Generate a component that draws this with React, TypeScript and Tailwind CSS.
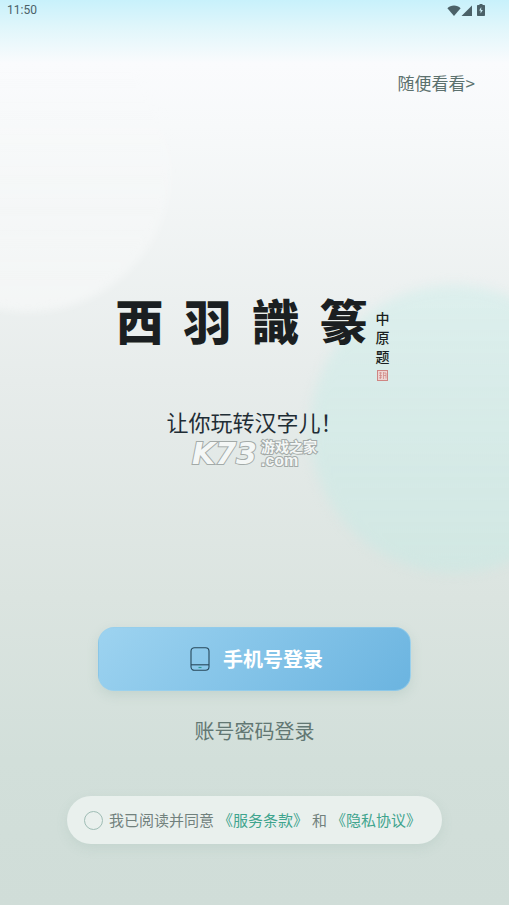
import { useState } from "react";

const BRAND = ["西", "羽", "識", "篆"];
const SIGNATURE = ["中", "原", "题"];

function WifiIcon() {
  return (
    <svg viewBox="0 0 14 11" className="h-[11px] w-[14px]" fill="currentColor" aria-hidden="true">
      <path d="M7 11 .4 3.2C2.200 1.500 4.400.6 7 .6s4.800.9 6.600 2.600z" />
    </svg>
  );
}

function SignalIcon() {
  return (
    <svg viewBox="0 0 11 11" className="h-[11px] w-[11px]" fill="currentColor" aria-hidden="true">
      <path d="M11 .5V11H.5z" />
    </svg>
  );
}

function BatteryIcon() {
  return (
    <svg viewBox="0 0 8 12" className="h-3 w-2" fill="currentColor" aria-hidden="true">
      <path
        fillRule="evenodd"
        d="M2.500 0h3v1H7c.6 0 1 .4 1 1v9c0 .6-.4 1-1 1H1c-.6 0-1-.4-1-1V2c0-.6.4-1 1-1h1.500zM4.200 3 2.200 6.500h1.400v3L5.800 6H4.200z"
      />
    </svg>
  );
}

function PhoneIcon() {
  return (
    <svg viewBox="0 0 20 24" className="h-6 w-5" fill="none" aria-hidden="true">
      <rect x="1" y="0.700" width="18" height="22.600" rx="3.500" stroke="#27475a" strokeWidth="1.100" />
      <path d="M1 17.800h18" stroke="#27475a" strokeWidth="1.100" />
      <path d="M8.500 20.500h3" stroke="#2f9c96" strokeWidth="1.200" />
    </svg>
  );
}

function SealIcon() {
  return (
    <svg viewBox="0 0 11 11" className="h-[11px] w-[11px]" fill="none" stroke="#cf8683" aria-hidden="true">
      <rect x="0.5" y="0.5" width="10" height="10" fill="#eed5d3" />
      <path d="M2 3h3M3.500 2v7M2 5.500h3M2 8l3-1M6.500 2v7M6.500 3H9v5.500M6.500 5.500H9" strokeWidth="0.700" />
    </svg>
  );
}

function StatusBar() {
  return (
    <div className="flex h-5 items-center justify-between pr-6 pl-[7px] text-[#4b6168]">
      <span className="font-['Roboto',sans-serif] text-xs">11:50</span>
      <div className="flex items-center">
        <WifiIcon />
        <SignalIcon />
        <span className="w-[5px]" />
        <BatteryIcon />
      </div>
    </div>
  );
}

function BrandTitle() {
  return (
    <div className="flex items-start justify-center gap-2 pr-1 text-[#1b1f21]">
      <h1 className="flex gap-5 text-5xl leading-9 font-black font-['Noto_Sans_CJK_TC',sans-serif]">
        {BRAND.map((char) => (
          <span key={char}>{char}</span>
        ))}
      </h1>
      <div className="flex flex-col items-center pt-2 text-sm leading-[19px] font-medium">
        {SIGNATURE.map((char) => (
          <span key={char}>{char}</span>
        ))}
        <span className="pt-1">
          <SealIcon />
        </span>
      </div>
    </div>
  );
}

function Watermark() {
  return (
    <div className="flex items-center justify-center gap-1 font-bold text-[#f4f7f6] [-webkit-text-stroke:2px_#a3aaa8] [paint-order:stroke_fill]">
      <span className="text-3xl leading-7 italic font-['DejaVu_Sans',sans-serif]">K73</span>
      <span className="flex flex-col font-['Liberation_Sans','Noto_Sans_CJK_SC',sans-serif]">
        <span className="text-sm leading-[14px]">游戏之家</span>
        <span className="text-base leading-[14px]">.com</span>
      </span>
    </div>
  );
}

export default function App() {
  const [agreed, setAgreed] = useState(false);

  return (
    <div className="relative flex min-h-screen flex-col overflow-hidden bg-[linear-gradient(180deg,#c8f1fb_0%,#e0f6fb_3%,#fafbfd_7%,#f7f9fa_14%,#e7eceb_42%,#dbe4e0_66%,#d2dfda_84%,#d0ddd8_100%)] font-['Noto_Sans_CJK_SC',sans-serif] whitespace-nowrap">
      {/* Soft background circles */}
      <div className="absolute top-6 -left-[116px] size-72 rounded-full bg-linear-to-b from-transparent from-15% to-white/45 blur-[4px]" />
      <div className="absolute top-[285px] left-[61%] size-72 rounded-full bg-linear-to-b from-[#cdeeea]/50 to-[#cae9e4]/60 blur-[6px]" />

      <div className="relative flex flex-1 flex-col">
        <StatusBar />

        <div className="flex justify-end pt-[51px] pr-[34px]">
          <a href="#browse" className="text-[17px] leading-6 text-[#5c716e]">
            随便看看&gt;
          </a>
        </div>

        <div className="pt-[206px]">
          <BrandTitle />
        </div>

        <div className="flex flex-col items-center gap-[3px] pt-6">
          <p className="text-[22px] leading-8 text-[#1f2d35]">让你玩转汉字儿！</p>
          <Watermark />
        </div>

        <div className="mt-auto flex flex-col items-center pb-[61px]">
          <div className="w-full px-[98px]">
            <button
              type="button"
              className="flex h-16 w-full items-center justify-center gap-[13px] rounded-2xl border border-[#9bd0eb]/60 bg-[linear-gradient(135deg,#9dd3f0,#6bb4e0)] pl-1 text-xl font-bold text-white shadow-[0_4px_12px_rgba(120,160,150,0.2)]"
            >
              <PhoneIcon />
              手机号登录
            </button>
          </div>

          <button type="button" className="mt-6 text-xl leading-8 text-[#627773]">
            账号密码登录
          </button>

          <div className="mt-[49px] w-full px-[67px]">
            <div className="flex h-12 items-center rounded-full bg-[#e9f0ed] pl-[17px] text-[15px] text-[#71817d] shadow-[0_4px_12px_rgba(120,160,150,0.15)]">
              <input
                id="agree"
                type="checkbox"
                checked={agreed}
                onChange={(e) => setAgreed(e.target.checked)}
                className="mr-1.5 size-[19px] shrink-0 appearance-none rounded-full border border-[#9fbdb5] checked:bg-[#3da58c]"
              />
              <label htmlFor="agree">我已阅读并同意</label>
              <a href="#terms" className="ml-1 text-[#3fa48d]">
                《服务条款》
              </a>
              <span className="mx-1">和</span>
              <a href="#privacy" className="text-[#3fa48d]">
                《隐私协议》
              </a>
            </div>
          </div>
        </div>
      </div>
    </div>
  );
}
